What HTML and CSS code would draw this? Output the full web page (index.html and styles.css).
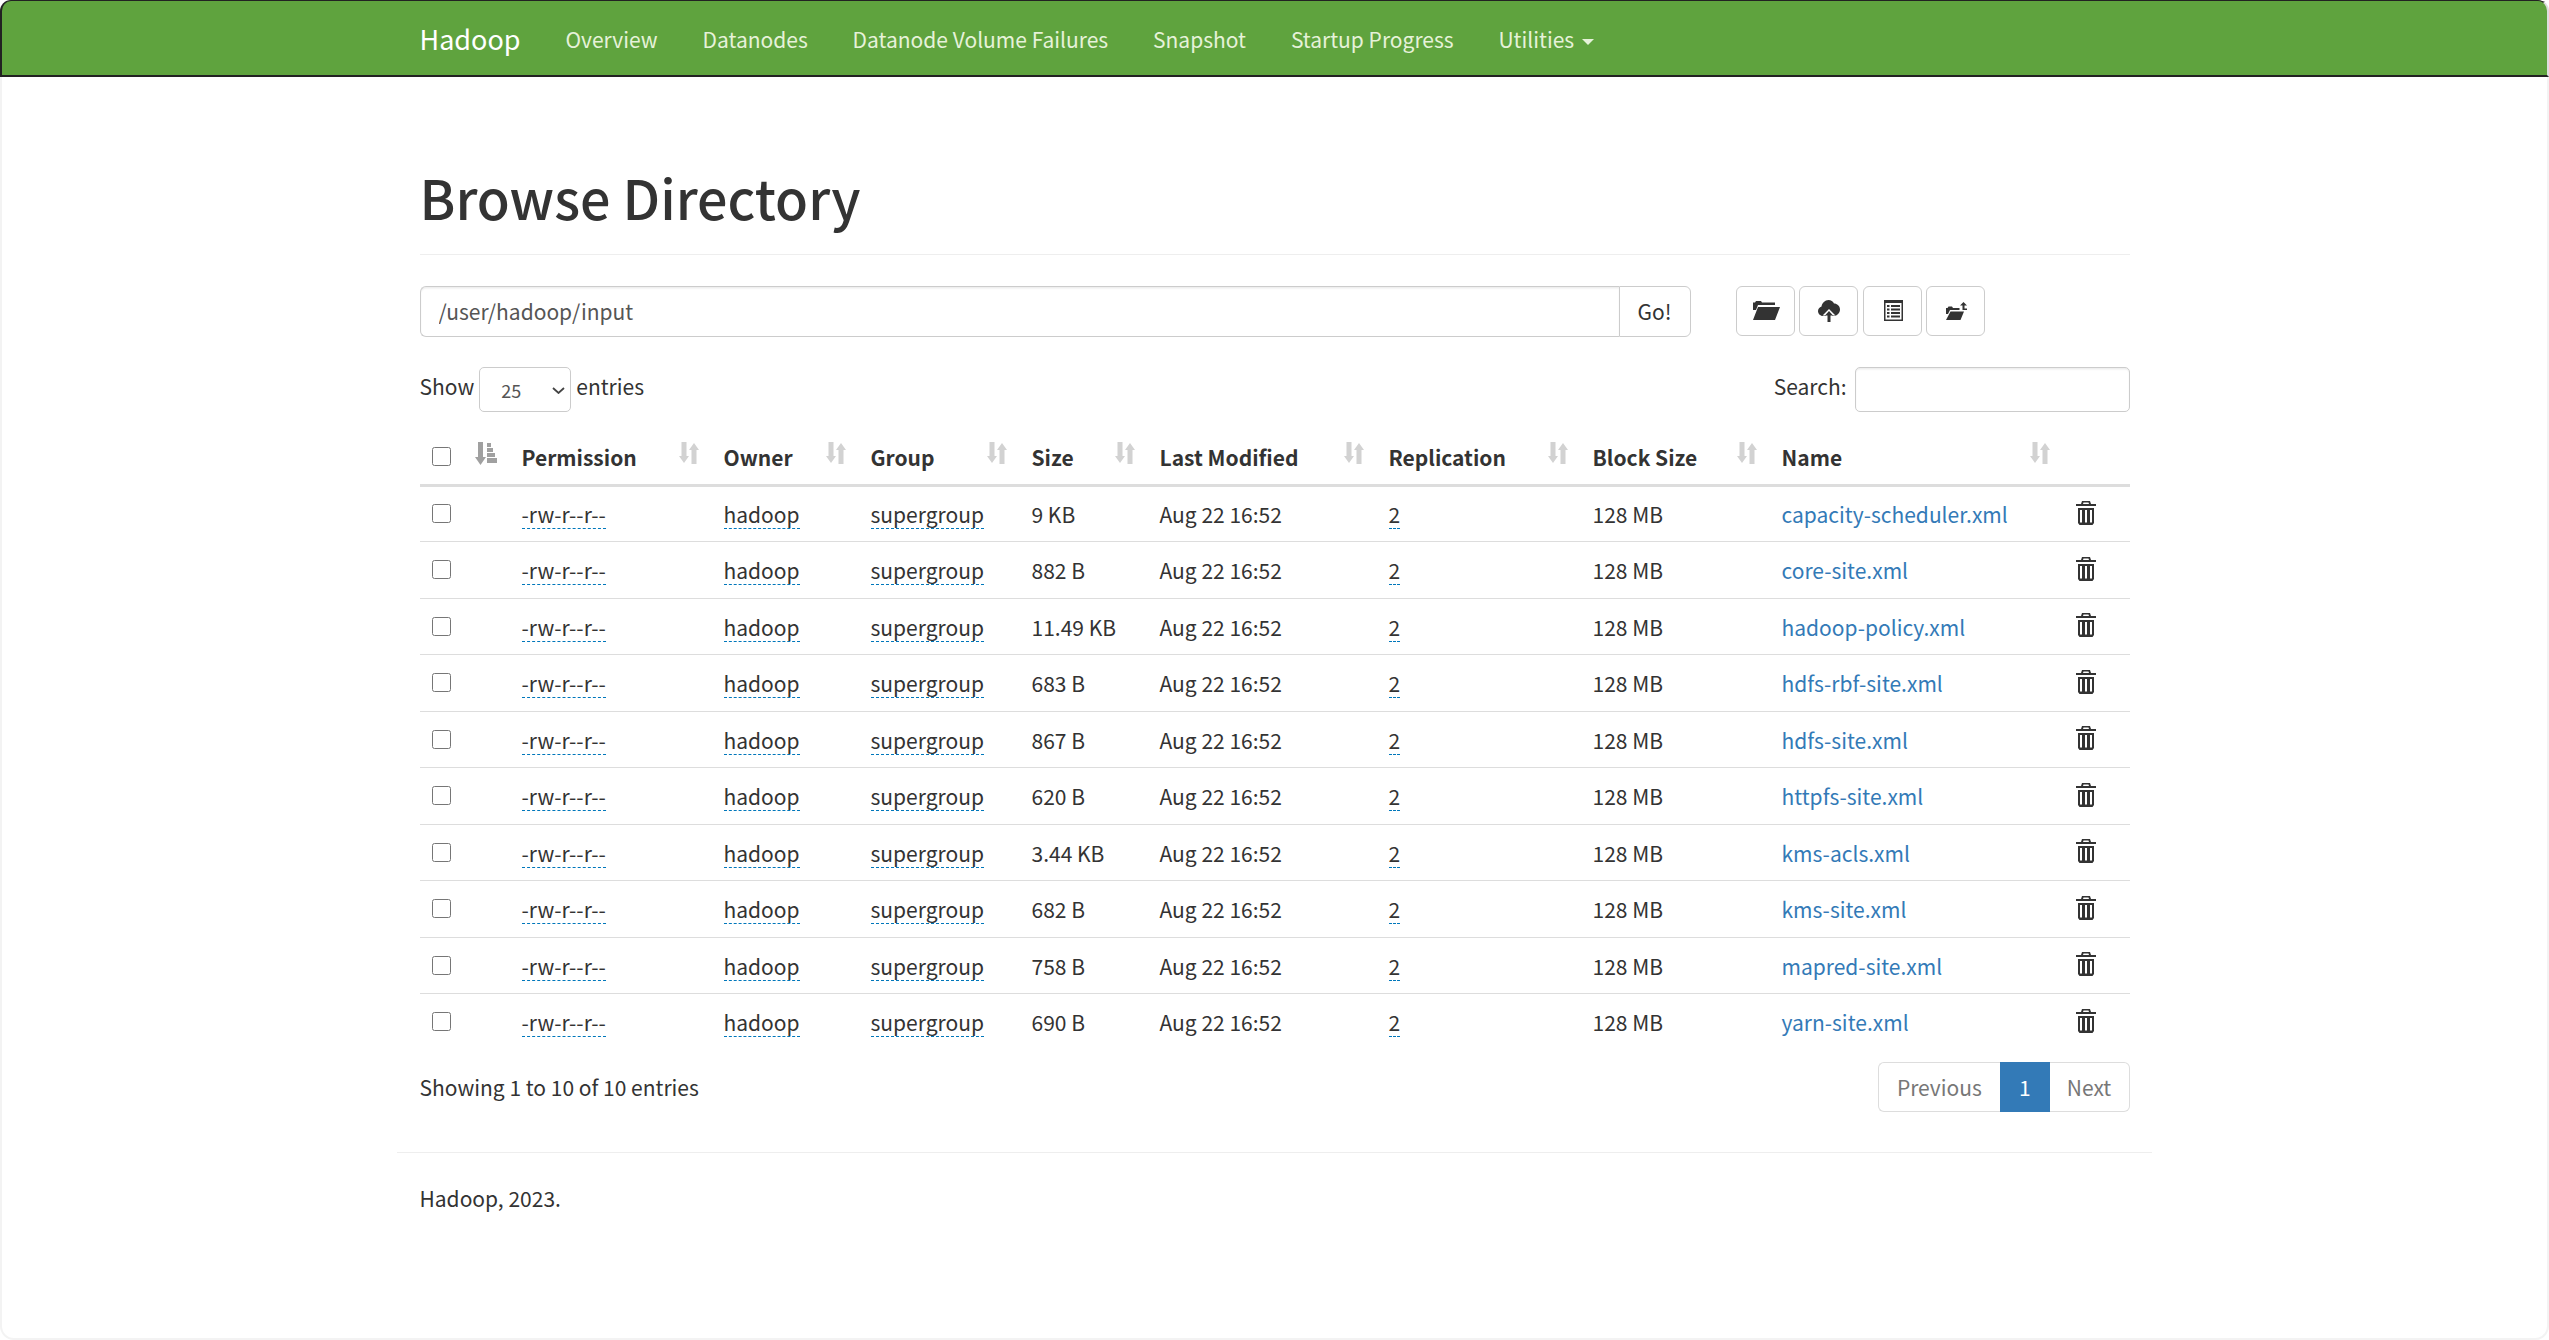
FILE: index.html
```html
<!DOCTYPE html>
<html lang="en">
<head>
<meta charset="utf-8">
<title>Browsing HDFS</title>
<link rel="stylesheet" href="styles.css">
</head>
<body>
<svg class="defs" width="0" height="0" aria-hidden="true">
  <defs>
    <symbol id="i-sort" viewBox="0 0 20 24"><path d="M2.500 1h5v14H10l-5 7-5-7h2.500zM15 2l5 7h-2.500v14h-5V9H10z"/></symbol>
    <symbol id="i-sorted" viewBox="0 0 22 23"><path d="M3 0h5v15h3l-5.500 8L0 15h3zM12 1h4v4h-4zM12 6h6v4h-6zM12 11h8v4h-8zM12 16h10v5H12z"/></symbol>
    <symbol id="i-trash" viewBox="0 0 20 24"><path fill-rule="evenodd" d="M6 0h8l1 3h5v2H0V3h5zM7.500 1.500L7 3h6l-.5-1.500zM2 7h16v15l-1.500 2h-13L2 22zM4 9v12.500h2V9zM9 9v12.500h2V9zM14 9v12.500h2V9z"/></symbol>
  </defs>
</svg>
<nav class="navbar">
  <div class="nav-inner">
    <a class="brand" href="#">Hadoop</a>
    <a class="nav-link" href="#">Overview</a>
    <a class="nav-link" href="#">Datanodes</a>
    <a class="nav-link" href="#">Datanode Volume Failures</a>
    <a class="nav-link" href="#">Snapshot</a>
    <a class="nav-link" href="#">Startup Progress</a>
    <a class="nav-link" href="#">Utilities <span class="caret"></span></a>
  </div>
</nav>
<main class="container">
  <div class="page-header"><h1>Browse Directory</h1></div>
  <div class="path-row">
    <div class="path-group">
      <input class="path-input" type="text" value="/user/hadoop/input">
      <button class="go-btn">Go!</button>
    </div>
    <div class="tools">
      <button class="icon-btn"><svg class="tool-icon" width="27" height="19" viewBox="0 0 27 19"><path d="M0 9V1.500h2L3 0h5l1 1.500h13V4H5L3 9zM5 6h22l-5 13H0z" fill="#333"/></svg></button>
      <button class="icon-btn"><svg width="22" height="22" viewBox="0 0 22 22"><path d="M5 16C2 16 0 13.500 0 11c0-2 1.500-4 3.500-4.500C4 3 7 0 10.500 0 13 0 15 1.500 16 3.500c3 0 6 2.500 6 6 0 3.500-3 6.500-6 6.500z" fill="#333"/><path d="M11 9l6.500 6.500H14V22H8v-6.500H4.500z" fill="#fff"/><path d="M11 11l4 4.500h-2.500V22h-3v-6.500H7z" fill="#333"/></svg></button>
      <button class="icon-btn"><svg class="tool-icon" width="19" height="21" viewBox="0 0 19 21"><path fill-rule="evenodd" d="M0 0h19v21H0zM1.500 3v16.500h16V3zM3 5h2.500v2H3zM7 5h9v2H7zM3 8.500h2.500v2H3zM7 8.500h9v2H7zM3 12h2.500v2H3zM7 12h9v2H7zM3 15.500h2.500v2H3zM7 15.500h9v2H7z" fill="#333"/></svg></button>
      <button class="icon-btn"><svg class="tool-icon" width="21" height="18" viewBox="0 0 21 18"><path d="M0 12V6h1.500l1-1.500h3.500l1 1.500h6.500v2H4l-2 4zM4.500 9.500H18L14.500 18H0z" fill="#333"/><path d="M17.500 0L21 3.500h-2.500V6.500H21V8h-4.500V3.500H14z" fill="#333"/></svg></button>
    </div>
  </div>
  <div class="dt-top">
    <label class="dt-length">Show <select class="dt-select"><option>25</option></select> entries</label>
    <label class="dt-search">Search: <input class="search-input" type="search"></label>
  </div>
  <table class="files">
    <thead>
      <tr>
        <th class="c-check"><input class="check" type="checkbox"></th>
        <th class="c-sorted"><svg class="sort-done"><use href="#i-sorted"/></svg></th>
        <th class="c-perm"><span class="th-in">Permission<svg class="sort"><use href="#i-sort"/></svg></span></th>
        <th class="c-owner"><span class="th-in">Owner<svg class="sort"><use href="#i-sort"/></svg></span></th>
        <th class="c-group"><span class="th-in">Group<svg class="sort"><use href="#i-sort"/></svg></span></th>
        <th class="c-size"><span class="th-in">Size<svg class="sort"><use href="#i-sort"/></svg></span></th>
        <th class="c-mod"><span class="th-in">Last Modified<svg class="sort"><use href="#i-sort"/></svg></span></th>
        <th class="c-rep"><span class="th-in">Replication<svg class="sort"><use href="#i-sort"/></svg></span></th>
        <th class="c-block"><span class="th-in">Block Size<svg class="sort"><use href="#i-sort"/></svg></span></th>
        <th class="c-name"><span class="th-in">Name<svg class="sort"><use href="#i-sort"/></svg></span></th>
        <th class="c-del"></th>
      </tr>
    </thead>
    <tbody>
      <tr><td><input class="check" type="checkbox"></td><td></td><td><span class="dotted">-rw-r--r--</span></td><td><span class="dotted">hadoop</span></td><td><span class="dotted">supergroup</span></td><td>9 KB</td><td>Aug 22 16:52</td><td><span class="dotted">2</span></td><td>128 MB</td><td><a href="#">capacity-scheduler.xml</a></td><td class="del"><svg class="trash"><use href="#i-trash"/></svg></td></tr>
      <tr><td><input class="check" type="checkbox"></td><td></td><td><span class="dotted">-rw-r--r--</span></td><td><span class="dotted">hadoop</span></td><td><span class="dotted">supergroup</span></td><td>882 B</td><td>Aug 22 16:52</td><td><span class="dotted">2</span></td><td>128 MB</td><td><a href="#">core-site.xml</a></td><td class="del"><svg class="trash"><use href="#i-trash"/></svg></td></tr>
      <tr><td><input class="check" type="checkbox"></td><td></td><td><span class="dotted">-rw-r--r--</span></td><td><span class="dotted">hadoop</span></td><td><span class="dotted">supergroup</span></td><td>11.49 KB</td><td>Aug 22 16:52</td><td><span class="dotted">2</span></td><td>128 MB</td><td><a href="#">hadoop-policy.xml</a></td><td class="del"><svg class="trash"><use href="#i-trash"/></svg></td></tr>
      <tr><td><input class="check" type="checkbox"></td><td></td><td><span class="dotted">-rw-r--r--</span></td><td><span class="dotted">hadoop</span></td><td><span class="dotted">supergroup</span></td><td>683 B</td><td>Aug 22 16:52</td><td><span class="dotted">2</span></td><td>128 MB</td><td><a href="#">hdfs-rbf-site.xml</a></td><td class="del"><svg class="trash"><use href="#i-trash"/></svg></td></tr>
      <tr><td><input class="check" type="checkbox"></td><td></td><td><span class="dotted">-rw-r--r--</span></td><td><span class="dotted">hadoop</span></td><td><span class="dotted">supergroup</span></td><td>867 B</td><td>Aug 22 16:52</td><td><span class="dotted">2</span></td><td>128 MB</td><td><a href="#">hdfs-site.xml</a></td><td class="del"><svg class="trash"><use href="#i-trash"/></svg></td></tr>
      <tr><td><input class="check" type="checkbox"></td><td></td><td><span class="dotted">-rw-r--r--</span></td><td><span class="dotted">hadoop</span></td><td><span class="dotted">supergroup</span></td><td>620 B</td><td>Aug 22 16:52</td><td><span class="dotted">2</span></td><td>128 MB</td><td><a href="#">httpfs-site.xml</a></td><td class="del"><svg class="trash"><use href="#i-trash"/></svg></td></tr>
      <tr><td><input class="check" type="checkbox"></td><td></td><td><span class="dotted">-rw-r--r--</span></td><td><span class="dotted">hadoop</span></td><td><span class="dotted">supergroup</span></td><td>3.44 KB</td><td>Aug 22 16:52</td><td><span class="dotted">2</span></td><td>128 MB</td><td><a href="#">kms-acls.xml</a></td><td class="del"><svg class="trash"><use href="#i-trash"/></svg></td></tr>
      <tr><td><input class="check" type="checkbox"></td><td></td><td><span class="dotted">-rw-r--r--</span></td><td><span class="dotted">hadoop</span></td><td><span class="dotted">supergroup</span></td><td>682 B</td><td>Aug 22 16:52</td><td><span class="dotted">2</span></td><td>128 MB</td><td><a href="#">kms-site.xml</a></td><td class="del"><svg class="trash"><use href="#i-trash"/></svg></td></tr>
      <tr><td><input class="check" type="checkbox"></td><td></td><td><span class="dotted">-rw-r--r--</span></td><td><span class="dotted">hadoop</span></td><td><span class="dotted">supergroup</span></td><td>758 B</td><td>Aug 22 16:52</td><td><span class="dotted">2</span></td><td>128 MB</td><td><a href="#">mapred-site.xml</a></td><td class="del"><svg class="trash"><use href="#i-trash"/></svg></td></tr>
      <tr><td><input class="check" type="checkbox"></td><td></td><td><span class="dotted">-rw-r--r--</span></td><td><span class="dotted">hadoop</span></td><td><span class="dotted">supergroup</span></td><td>690 B</td><td>Aug 22 16:52</td><td><span class="dotted">2</span></td><td>128 MB</td><td><a href="#">yarn-site.xml</a></td><td class="del"><svg class="trash"><use href="#i-trash"/></svg></td></tr>
    </tbody>
  </table>
  <div class="dt-bottom">
    <div class="dt-info">Showing 1 to 10 of 10 entries</div>
    <div class="pagination">
      <a class="page prev" href="#">Previous</a>
      <a class="page current" href="#">1</a>
      <a class="page next" href="#">Next</a>
    </div>
  </div>
  <hr class="foot-rule">
  <footer class="footer">Hadoop, 2023.</footer>
</main>
</body>
</html>
```
FILE: styles.css
```css
* { box-sizing: border-box; }
html, body { margin: 0; padding: 0; background: #fff; }
body {
  font-family: "Noto Sans CJK SC", "Noto Sans", sans-serif;
  font-size: 21px;
  line-height: 30px;
  color: #333;
  min-height: 100vh;
}
body::after {
  content: "";
  position: fixed;
  left: 0;
  right: 0;
  top: 77px;
  bottom: 0;
  border: solid #f3f3f3;
  border-width: 0 2px 2px;
  border-radius: 0 0 14px 14px;
  pointer-events: none;
}
a { color: #337ab7; text-decoration: none; }
.defs { position: absolute; }
.navbar {
  height: 77px;
  background: #5fa33e;
  border: 2px solid #222;
  border-top-width: 1px;
  border-right-color: #ddd;
  border-radius: 11px 11px 0 0;
}
.nav-inner {
  width: 1710px;
  margin: 0 auto;
  display: flex;
  height: 76px;
  align-items: center;
}
.brand { color: #fff; font-size: 27px; margin-right: 22.500px; }
.nav-link { color: #e6f2d9; padding: 0 22.450px; }
.caret {
  display: inline-block;
  border-top: 6px solid #e6f2d9;
  border-left: 6px solid transparent;
  border-right: 6px solid transparent;
  vertical-align: middle;
  margin-left: 3px;
}
.container { width: 1755px; margin: 0 auto; padding: 0 22.500px; }
.page-header { margin-top: 81px; border-bottom: 1.500px solid #eee; height: 97px; }
h1 { margin: 0; font-size: 53.800px; line-height: 78px; font-weight: 500; color: #333; }
.path-row { display: flex; margin-top: 30.500px; height: 51px; }
.path-group { display: flex; width: 1271px; }
.path-input {
  flex: 1;
  height: 51px;
  font: inherit;
  color: #555;
  padding: 0 18px;
  border: 1.500px solid #ccc;
  border-right: 0;
  border-radius: 6px 0 0 6px;
  box-shadow: inset 0 1.500px 1.500px rgba(0,0,0,.075);
}
.go-btn {
  width: 72px;
  height: 51px;
  font: inherit;
  color: #333;
  background: #fff;
  border: 1.500px solid #ccc;
  border-radius: 0 6px 6px 0;
  padding: 0;
}
.tools { display: flex; gap: 4.500px; margin-left: 45px; }
.icon-btn {
  width: 59px;
  height: 50px;
  background: #fff;
  border: 1.500px solid #ccc;
  border-radius: 6px;
  padding: 0;
  display: flex;
  align-items: center;
  justify-content: center;
}
.icon-btn svg { display: block; }
.tool-icon { margin-left: 2px; }
.dt-top { display: flex; justify-content: space-between; margin-top: 30.500px; height: 47px; }
.dt-length { display: flex; align-items: flex-start; gap: 5px; height: 45px; line-height: 38px; }
.dt-select {
  appearance: none;
  width: 92px;
  height: 45px;
  font-family: inherit;
  font-size: 18px;
  color: #555;
  background: #fff url("data:image/svg+xml,%3Csvg xmlns='http://www.w3.org/2000/svg' width='13' height='7'%3E%3Cpath d='M1 1l5.500 5L12 1' fill='none' stroke='%23444' stroke-width='1.800'/%3E%3C/svg%3E") no-repeat 72px 19px;
  border: 1.500px solid #ccc;
  border-radius: 5px;
  padding: 4px 21px;
}
.dt-search { display: flex; gap: 8px; line-height: 38px; }
.search-input { width: 275px; height: 45px; border: 1.500px solid #ccc; border-radius: 5px; background: #fff; box-shadow: inset 0 1.500px 1.500px rgba(0,0,0,.075); }
.files { width: 1710px; border-collapse: collapse; table-layout: fixed; margin-top: 14.300px; }
.files th {
  height: 57px;
  padding: 13.500px 0 0 12px;
  text-align: left;
  font-weight: 700;
  border-bottom: 3px solid #ddd;
  vertical-align: top;
}
.files td {
  height: 56.500px;
  padding: 0 0 0 12px;
  border-bottom: 1.500px solid #ddd;
  vertical-align: middle;
}
.files tbody tr:last-child td { border-bottom: 0; }
.c-check { width: 41px; }
.c-sorted { width: 49px; }
.c-perm { width: 202px; }
.c-owner { width: 147px; }
.c-group { width: 161px; }
.c-size { width: 128px; }
.c-mod { width: 229px; }
.c-rep { width: 204px; }
.c-block { width: 189px; }
.c-name { width: 293px; }
.c-del { width: 67px; }
.th-in { display: flex; justify-content: space-between; padding-right: 13px; }
.sort { width: 20px; height: 24px; fill: #d2d2d2; margin-top: -1px; }
.sort-done { width: 22px; height: 23px; fill: #a0a0a0; display: block; margin-top: 0; margin-left: 2px; }
.trash { width: 20px; height: 24px; fill: #333; display: block; margin-left: 1px; margin-top: -3px; }
.check { width: 19px; height: 19px; margin: 0; display: block; }
.files th .check { margin-top: 5px; }
.files td .check { margin-top: -1px; }
.dotted { border-bottom: 1.500px dashed #0077bb; display: inline-block; line-height: 27px; }
.dt-bottom { display: flex; justify-content: space-between; margin-top: 12px; height: 51px; }
.dt-info { line-height: 51px; }
.pagination { display: flex; height: 50px; }
.page { display: block; padding: 0 18px; line-height: 48px; color: #777; border: 1.500px solid #ddd; background: #fff; }
.prev { border-radius: 6px 0 0 6px; border-right: 0; }
.next { border-radius: 0 6px 6px 0; border-left: 0; padding-right: 17.250px; padding-left: 17.250px; }
.current { color: #fff; background: #337ab7; border-color: #337ab7; }
.foot-rule { margin: 39px -22.500px 0; border: 0; border-top: 1.500px solid #eee; }
.footer { margin-top: 30px; }
```
